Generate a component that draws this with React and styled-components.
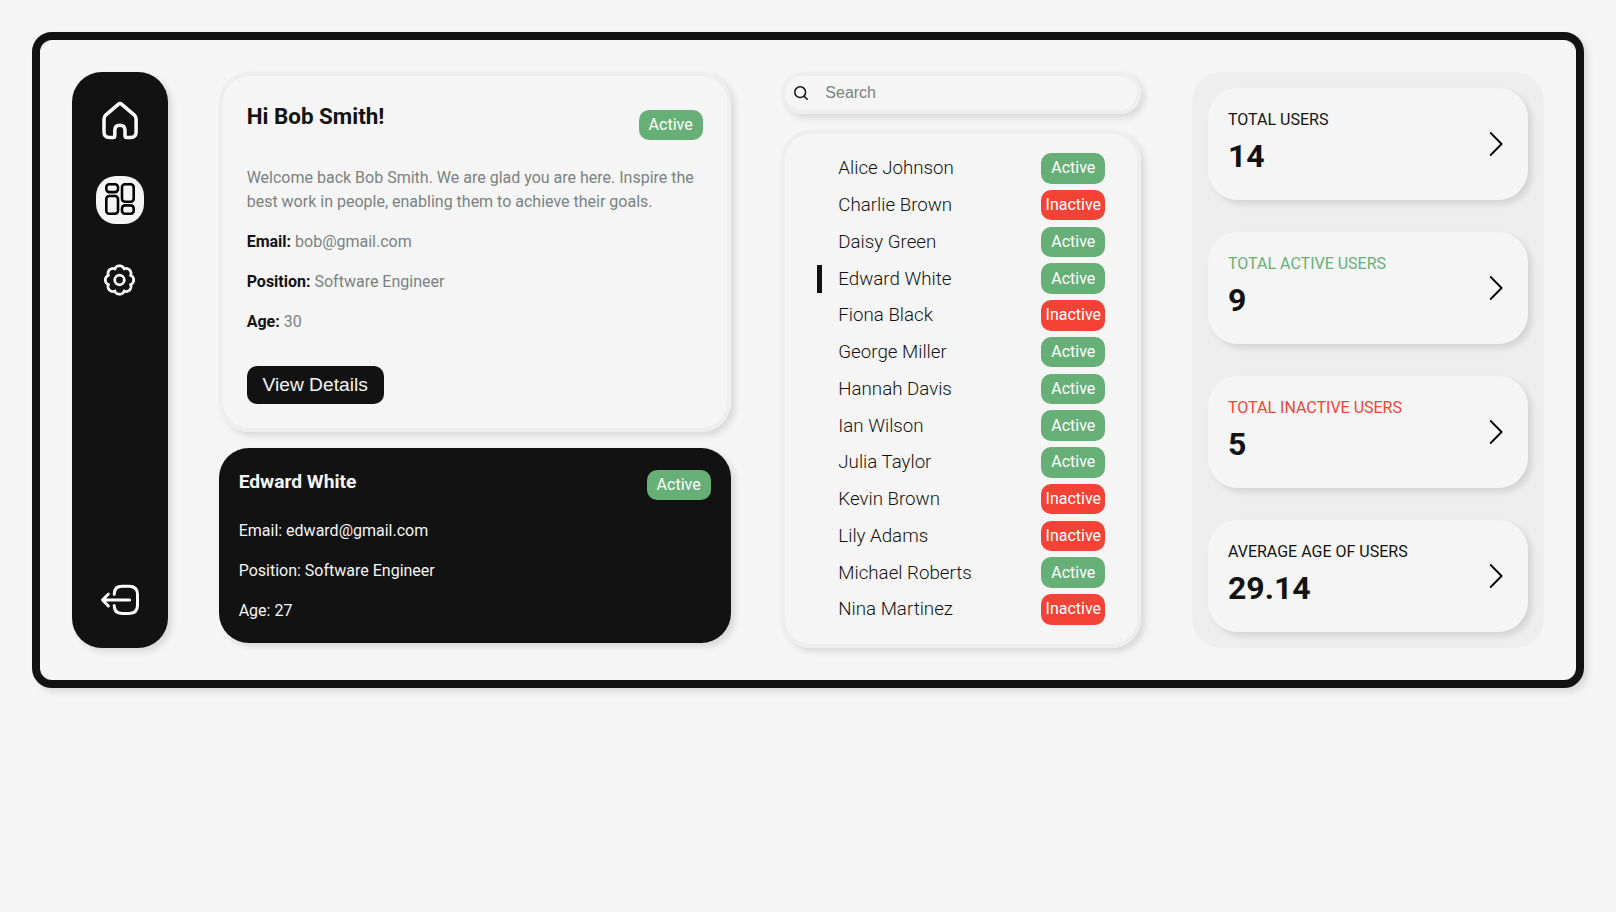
import React from "react";
import styled, { createGlobalStyle, css } from "styled-components";

const GlobalStyle = createGlobalStyle`
  *, *::before, *::after { box-sizing: border-box; }
  body {
    margin: 0;
    background: #f5f5f5;
    color: #121212;
    font-family: Roboto, sans-serif;
    font-size: 16px;
    line-height: 24px;
  }
  h2, h3, p, ul { margin: 0; padding: 0; font-weight: inherit; }
`;

const shadow = css`
  box-shadow: 4px 4px 6px rgba(0, 0, 0, 0.11);
`;

const Dashboard = styled.div`
  display: flex;
  justify-content: space-between;
  height: 656px;
  margin: 32px;
  padding: 32px;
  border: 8px solid #121212;
  border-radius: 20px;
  ${shadow}
`;

const Sidebar = styled.nav`
  display: flex;
  flex-direction: column;
  align-items: center;
  gap: 32px;
  width: 96px;
  padding: 24px 0;
  border-radius: 30px;
  background: #121212;
  ${shadow}
`;

const NavItem = styled.a`
  display: flex;
  align-items: center;
  justify-content: center;
  width: 48px;
  height: 48px;
  border-radius: 20px;
  color: ${(p) => (p.$active ? "#000" : "#fff")};
  background: ${(p) => (p.$active ? "#f5f5f5" : "transparent")};
  margin-top: ${(p) => (p.$last ? "auto" : "0")};
`;

const Column = styled.section`
  display: flex;
  flex-direction: column;
  gap: 16px;
  width: ${(p) => p.$width}px;
`;

const WelcomeCard = styled.article`
  height: 360px;
  padding: 24px;
  border: 4px solid #eee;
  border-radius: 30px;
  ${shadow}
`;

const CardHeader = styled.header`
  display: flex;
  justify-content: space-between;
  align-items: flex-start;
`;

const Greeting = styled.h2`
  padding-top: 2px;
  font-size: 22.4px;
  font-weight: 700;
  line-height: 28px;
`;

const Badge = styled.span`
  display: flex;
  align-items: center;
  justify-content: center;
  flex: none;
  width: 64px;
  height: ${(p) => p.$height || 30}px;
  margin-top: ${(p) => p.$drop || 0}px;
  padding-bottom: 0.2px;
  border-radius: 10px;
  color: #fff;
  font-weight: 400;
  background: ${(p) => (p.$active ? "#66b077" : "#f44336")};
`;

const Intro = styled.p`
  margin-top: 26px;
  color: #7a8282;
`;

const Field = styled.p`
  margin-top: 16px;
  color: #7a8282;
  strong { color: #121212; font-weight: 700; }
`;

const DetailsButton = styled.button`
  width: 137px;
  height: 38px;
  margin-top: 32px;
  padding: 0;
  border: 0;
  border-radius: 10px;
  color: #f5f5f5;
  background: #121212;
  font: 19.2px "Liberation Sans", Arial, sans-serif;
`;

const SelectedCard = styled.article`
  height: 195px;
  padding: 22px 20px;
  border-radius: 30px;
  color: #f5f5f5;
  background: #121212;
  ${shadow}
`;

const SelectedName = styled.h3`
  padding-top: 1px;
  font-size: 19.2px;
  font-weight: 700;
  line-height: 22px;
`;

const SelectedFields = styled.div`
  display: flex;
  flex-direction: column;
  gap: 16px;
  margin-top: 19px;
`;

const SearchBar = styled.label`
  display: flex;
  align-items: center;
  height: 42px;
  padding-left: 9px;
  border: 4px solid #eee;
  border-radius: 30px;
  ${shadow}
`;

const SearchInput = styled.input`
  flex: 1;
  min-width: 0;
  margin-left: 17px;
  padding: 0;
  border: 0;
  outline: 0;
  background: transparent;
  font: 16px "Liberation Sans", Arial, sans-serif;
  &::placeholder { color: #7a8282; opacity: 1; }
`;

const UserList = styled.ul`
  flex: 1;
  display: flex;
  flex-direction: column;
  gap: 6.36px;
  padding: 19.2px 32px 0;
  border: 4px solid #eee;
  border-radius: 30px;
  list-style: none;
  ${shadow}
`;

const UserRow = styled.li`
  display: flex;
  align-items: center;
  height: 30.4px;
`;

const Marker = styled.span`
  width: 5px;
  height: 28px;
  margin-right: 16px;
  background: ${(p) => (p.$on ? "#121212" : "transparent")};
`;

const UserName = styled.span`
  flex: 1;
  padding-bottom: 0.2px;
  font-size: 18.72px;
  font-weight: 300;
`;

const Stats = styled.aside`
  display: flex;
  flex-direction: column;
  gap: 32px;
  width: 352px;
  padding: 16px;
  border-radius: 30px;
  background: #eee;
`;

const StatCard = styled.article`
  display: flex;
  align-items: center;
  justify-content: space-between;
  height: 112px;
  padding: 0 20px;
  border-radius: 30px;
  background: #f5f5f5;
  ${shadow}
`;

const StatLabel = styled.p`
  color: ${(p) => p.$color};
`;

const StatValue = styled.p`
  font-size: 32px;
  font-weight: 700;
  line-height: 48px;
`;

const users = [
  ["Alice Johnson", true],
  ["Charlie Brown", false],
  ["Daisy Green", true],
  ["Edward White", true],
  ["Fiona Black", false],
  ["George Miller", true],
  ["Hannah Davis", true],
  ["Ian Wilson", true],
  ["Julia Taylor", true],
  ["Kevin Brown", false],
  ["Lily Adams", false],
  ["Michael Roberts", true],
  ["Nina Martinez", false],
];

const stats = [
  ["TOTAL USERS", "14", "#121212"],
  ["TOTAL ACTIVE USERS", "9", "#66b077"],
  ["TOTAL INACTIVE USERS", "5", "#f44336"],
  ["AVERAGE AGE OF USERS", "29.14", "#121212"],
];

const HomeIcon = () => (
  <svg width="40" height="40" viewBox="0 0 40 40" fill="none" stroke="currentColor" strokeWidth="3.5" strokeLinejoin="round">
    <path d="M18.2 4.4 5.4 15.4Q4 16.8 4 19V32Q4 37.5 9.5 37.5H13Q14.8 37.5 14.8 35.7V30.3Q14.8 25.3 19.9 25.3T25 30.3V35.7Q25 37.5 26.8 37.5H30.6Q36.1 37.5 36.1 32V19Q36.1 16.8 34.7 15.4L21.8 4.4Q20 2.9 18.2 4.4Z" />
  </svg>
);

const BoardIcon = () => (
  <svg width="32" height="34" viewBox="0 0 32 34" fill="none" stroke="currentColor" strokeWidth="2.6">
    <rect x="2.3" y="1.3" width="11.7" height="7.8" rx="3" />
    <rect x="2.3" y="13" width="11.7" height="17.8" rx="3" />
    <rect x="18" y="1.3" width="11.7" height="17.5" rx="3" />
    <rect x="18" y="22.4" width="11.7" height="8.4" rx="3" />
  </svg>
);

// Eight rounded teeth with narrow notches between them.
const gearPath = (() => {
  const points = [];
  for (let i = 0; i <= 160; i += 1) {
    const a = (i / 160) * Math.PI * 2;
    const r = 11.9 + 2.3 * Math.abs(Math.cos(4 * a)) ** 0.7;
    points.push(`${(15.5 + r * Math.sin(a)).toFixed(2)} ${(16 - r * Math.cos(a)).toFixed(2)}`);
  }
  return `M${points.join("L")}Z`;
})();

const GearIcon = () => (
  <svg width="32" height="32" viewBox="0 0 32 32" fill="none" stroke="currentColor" strokeWidth="2.7" strokeLinejoin="round">
    <path d={gearPath} />
    <circle cx="15.5" cy="16" r="4.8" />
  </svg>
);

const LogoutIcon = () => (
  <svg width="40" height="34" viewBox="0 0 40 34" fill="none" stroke="currentColor" strokeWidth="3" strokeLinecap="round" strokeLinejoin="round">
    <path d="M14.2 11.2Q14.2 3.3 22.2 3.3H29Q37.5 3.3 37.5 11.5V22.3Q37.5 30.5 29 30.5H22.2Q14.2 30.5 14.2 22.6" />
    <path d="M29.6 17H2.8M8.4 11 2.5 17l5.9 6" />
  </svg>
);

const SearchIcon = () => (
  <svg width="14" height="14" viewBox="0 0 14 14" fill="none" stroke="#121212" strokeWidth="1.5" strokeLinecap="round">
    <circle cx="6.2" cy="6.2" r="5.4" />
    <path d="m10.2 10.2 3 3" />
  </svg>
);

const ChevronIcon = () => (
  <svg width="24" height="24" viewBox="0 0 24 24" fill="none" stroke="#000" strokeWidth="1.8" strokeLinecap="round" strokeLinejoin="round">
    <path d="M6.7 1 17.6 12 6.7 23" />
  </svg>
);

export default function App() {
  return (
    <>
      <GlobalStyle />
      <Dashboard>
        <Sidebar>
          <NavItem><HomeIcon /></NavItem>
          <NavItem $active><BoardIcon /></NavItem>
          <NavItem><GearIcon /></NavItem>
          <NavItem $last><LogoutIcon /></NavItem>
        </Sidebar>

        <Column $width={512}>
          <WelcomeCard>
            <CardHeader>
              <Greeting>Hi Bob Smith!</Greeting>
              <Badge $active $drop={10}>Active</Badge>
            </CardHeader>
            <Intro>
              Welcome back Bob Smith. We are glad you are here. Inspire the best work in people, enabling them to achieve their goals.
            </Intro>
            <Field><strong>Email:</strong> bob@gmail.com</Field>
            <Field><strong>Position:</strong> Software Engineer</Field>
            <Field><strong>Age:</strong> 30</Field>
            <DetailsButton>View Details</DetailsButton>
          </WelcomeCard>
          <SelectedCard>
            <CardHeader>
              <SelectedName>Edward White</SelectedName>
              <Badge $active>Active</Badge>
            </CardHeader>
            <SelectedFields>
              <p>Email: edward@gmail.com</p>
              <p>Position: Software Engineer</p>
              <p>Age: 27</p>
            </SelectedFields>
          </SelectedCard>
        </Column>

        <Column $width={360}>
          <SearchBar>
            <SearchIcon />
            <SearchInput placeholder="Search" />
          </SearchBar>
          <UserList>
            {users.map(([name, active]) => (
              <UserRow key={name}>
                <Marker $on={name === "Edward White"} />
                <UserName>{name}</UserName>
                <Badge $active={active} $height={30.4}>{active ? "Active" : "Inactive"}</Badge>
              </UserRow>
            ))}
          </UserList>
        </Column>

        <Stats>
          {stats.map(([label, value, color]) => (
            <StatCard key={label}>
              <div>
                <StatLabel $color={color}>{label}</StatLabel>
                <StatValue>{value}</StatValue>
              </div>
              <ChevronIcon />
            </StatCard>
          ))}
        </Stats>
      </Dashboard>
    </>
  );
}
